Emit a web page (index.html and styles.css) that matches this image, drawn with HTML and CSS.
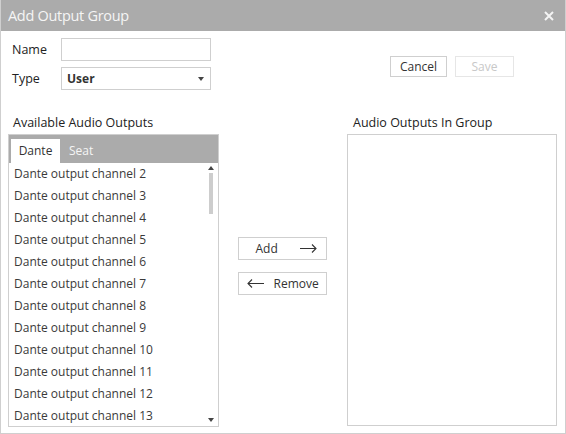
FILE: index.html
```html
<!DOCTYPE html>
<html>
<head>
<meta charset="utf-8">
<link rel="stylesheet" href="styles.css">
</head>
<body>
<div class="dialog">
  <div class="titlebar">
    <span class="title">Add Output Group</span>
    <svg class="close" width="10" height="10" viewBox="0 0 10 10"><path d="M1 1L9 9M9 1L1 9" stroke="#f4f4f4" stroke-width="2"/></svg>
  </div>
  <div class="top">
    <div class="form">
      <div class="row"><label class="lbl">Name</label><div class="input"></div></div>
      <div class="row"><label class="lbl">Type</label><div class="input select"><span class="sel-val">User</span><span class="caret"></span></div></div>
    </div>
    <div class="actions">
      <button class="btn cancel">Cancel</button>
      <button class="btn save">Save</button>
    </div>
  </div>
  <div class="heads">
    <div class="head left-head">Available Audio Outputs</div>
    <div class="head right-head">Audio Outputs In Group</div>
  </div>
  <div class="main">
    <div class="panel">
      <div class="tabs">
        <div class="tab active">Dante</div>
        <div class="tab">Seat</div>
      </div>
      <div class="listwrap">
        <ul class="items">
          <li>Dante output channel 2</li>
          <li>Dante output channel 3</li>
          <li>Dante output channel 4</li>
          <li>Dante output channel 5</li>
          <li>Dante output channel 6</li>
          <li>Dante output channel 7</li>
          <li>Dante output channel 8</li>
          <li>Dante output channel 9</li>
          <li>Dante output channel 10</li>
          <li>Dante output channel 11</li>
          <li>Dante output channel 12</li>
          <li>Dante output channel 13</li>
        </ul>
        <div class="scrollbar">
          <span class="arrow-up"></span>
          <span class="thumb"></span>
          <span class="arrow-down"></span>
        </div>
      </div>
    </div>
    <div class="middle">
      <button class="btn move add"><span>Add</span><svg width="17" height="9" viewBox="0 0 17 9"><path d="M0 4.5H16M12 0.5L16 4.5L12 8.5" fill="none" stroke="#333" stroke-width="1.1"/></svg></button>
      <button class="btn move remove"><svg width="17" height="9" viewBox="0 0 17 9"><path d="M17 4.5H1M5 0.5L1 4.5L5 8.5" fill="none" stroke="#333" stroke-width="1.1"/></svg><span>Remove</span></button>
    </div>
    <div class="panel group"></div>
  </div>
</div>
</body>
</html>
```
FILE: styles.css
```css
* { box-sizing: border-box; }
html, body { margin: 0; padding: 0; background: #fff; }
body { font-family: "Open Sans", "Noto Sans", sans-serif; color: #333; font-size: 12px; }
.dialog {
  width: 566px; height: 434px;
  border: 1px solid #cfcfcf; border-top: none;
  display: flex; flex-direction: column;
  overflow: hidden;
}
.titlebar {
  height: 31px; background: #ababab; margin: 0 -1px;
  display: flex; align-items: center; justify-content: space-between;
  padding: 0 12px 0 8px;
}
.title { color: #f5f5f5; font-size: 14.5px; letter-spacing: -0.3px; }
.close { display: block; }
.top { display: flex; padding: 7px 0 0 11px; height: 80px; }
.form { display: flex; flex-direction: column; gap: 6px; }
.row { display: flex; align-items: center; }
.lbl { width: 49px; font-size: 12.5px; color: #222; }
.input { width: 150px; height: 23px; border: 1px solid #cfcfcf; background: #fff; }
.select { display: flex; align-items: center; justify-content: space-between; padding: 0 6px 0 5px; }
.sel-val { font-weight: bold; font-size: 12px; color: #333; }
.caret { width: 0; height: 0; border-left: 3px solid transparent; border-right: 3px solid transparent; border-top: 4px solid #444; }
.actions { margin-left: auto; margin-right: 51px; margin-top: 18px; display: flex; gap: 8px; align-items: flex-start; }
.btn {
  font-family: inherit; font-size: 12px; background: #fff;
  border: 1px solid #cfcfcf; color: #333; padding: 0; margin: 0;
  display: flex; align-items: center; justify-content: center;
}
.cancel { width: 57px; height: 21px; }
.save { width: 59px; height: 21px; color: #c8c8c8; border-color: #e6e6e6; }
.heads { display: flex; height: 23px; align-items: center; padding-bottom: 1px; }
.head { font-size: 12.5px; color: #222; }
.left-head { margin-left: 12px; width: 340px; }
.main { display: flex; padding: 0 0 0 7px; }
.panel { width: 211px; height: 293px; border: 1px solid #cfcfcf; }
.group { width: 210px; height: 292px; margin-left: auto; margin-right: 8px; }
.tabs { height: 28px; background: #ababab; display: flex; align-items: flex-end; padding-left: 2px; }
.tab { height: 24px; line-height: 24px; padding: 0 9px 0 9px; color: #f5f5f5; font-size: 12px; }
.tab.active { background: #fff; color: #333; width: 49px; text-align: center; padding: 0; }
.listwrap { display: flex; height: 263px; }
.items { list-style: none; margin: 0; padding: 0; flex: 1; }
.items li { height: 22px; line-height: 22px; padding-left: 5px; color: #3a3a3a; font-size: 12px; white-space: nowrap; }
.scrollbar { width: 14px; display: flex; flex-direction: column; align-items: center; padding: 3px 0 4px; }
.arrow-up { width: 0; height: 0; border-left: 3px solid transparent; border-right: 3px solid transparent; border-bottom: 4px solid #444; }
.thumb { width: 4px; height: 41px; background: #cdcdcd; margin-top: 3px; }
.arrow-down { width: 0; height: 0; border-left: 3px solid transparent; border-right: 3px solid transparent; border-top: 4px solid #444; margin-top: auto; }
.middle { width: 128px; display: flex; flex-direction: column; align-items: center; padding-top: 103px; padding-right: 2px; gap: 12px; }
.move { width: 89px; height: 23px; }
.add { justify-content: space-between; padding: 0 9px 0 17px; }
.remove { justify-content: flex-start; gap: 10px; padding: 0 0 0 8px; }
```
